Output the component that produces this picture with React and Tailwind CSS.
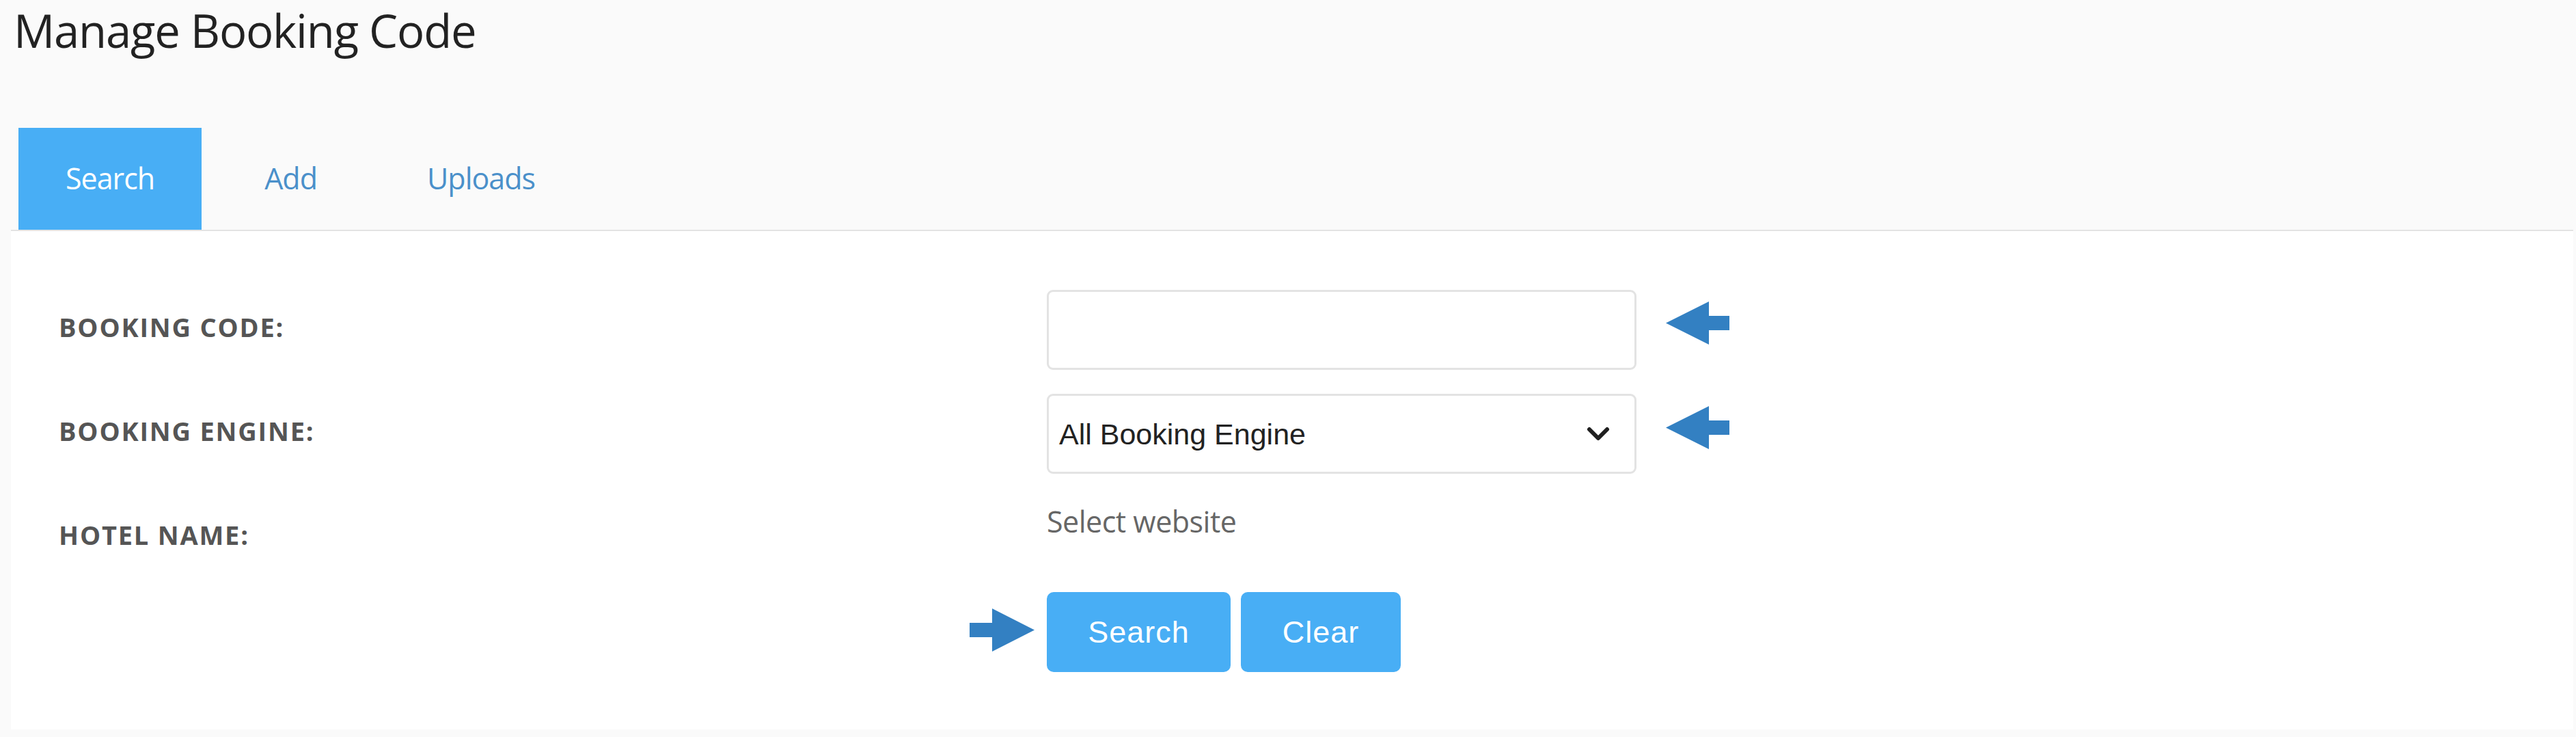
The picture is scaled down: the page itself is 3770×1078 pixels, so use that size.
import React from "react";

function ArrowLeft() {
  return (
    <svg width="93" height="63" viewBox="0 0 93 63" className="block">
      <polygon points="0,31.5 63,0 63,21 93,21 93,42 63,42 63,63" fill="#3380c2" />
    </svg>
  );
}

function ArrowRight() {
  return (
    <svg width="95" height="63" viewBox="0 0 95 63" className="block">
      <polygon points="95,31.5 33,0 33,21 0,21 0,42 33,42 33,63" fill="#3380c2" />
    </svg>
  );
}

function Chevron() {
  return (
    <svg width="34" height="22" viewBox="0 0 34 22" className="block">
      <polyline
        points="4,4 17,17 30,4"
        fill="none"
        stroke="#1f1f1f"
        strokeWidth="6"
        strokeLinecap="round"
        strokeLinejoin="round"
      />
    </svg>
  );
}

const labelCls =
  "w-[1516px] shrink-0 pl-[70px] pt-[34px] leading-[40px] text-[38px] font-bold tracking-[1.8px] text-[#555555] font-['Open_Sans',sans-serif]";

export default function App() {
  return (
    <div className="min-h-screen w-full bg-[#fafafa] font-['Open_Sans',sans-serif]">
      <div className="pl-[20px] pt-[4px]">
        <h1 className="text-[67px] leading-[80px] font-normal tracking-[-1.2px] text-[#222222]">
          Manage Booking Code
        </h1>
      </div>

      <div className="ml-[16px] mr-[4px] mt-[103px]">
        {/* Tabs */}
        <div className="flex pl-[11px] border-b-2 border-[#e3e3e3]">
          <div className="h-[149px] px-[69px] mr-[23px] flex items-center bg-[#48aef5] text-white text-[43px] tracking-[-1px]">
            Search
          </div>
          <div className="h-[149px] px-[69px] mr-[23px] flex items-center text-[#4a90ca] text-[43px] tracking-[-1px]">
            Add
          </div>
          <div className="h-[149px] px-[69px] mr-[23px] flex items-center text-[#4a90ca] text-[43px] tracking-[-1px]">
            Uploads
          </div>
        </div>

        {/* Panel */}
        <div className="bg-white pt-[86px] pb-[84px]">
          {/* Row 1 */}
          <div className="flex items-start h-[117px]">
            <div className={labelCls}>BOOKING CODE:</div>
            <div className="w-[863px] h-[117px] shrink-0 border-[3px] border-[#e3e3e3] rounded-[9px] bg-white"></div>
            <div className="ml-[43px] mt-[17px]">
              <ArrowLeft />
            </div>
          </div>

          {/* Row 2 */}
          <div className="flex items-start h-[117px] mt-[35px]">
            <div className={labelCls}>BOOKING ENGINE:</div>
            <div className="w-[863px] h-[117px] shrink-0 border-[3px] border-[#e3e3e3] rounded-[9px] bg-white flex items-center justify-between pl-[15px] pr-[36px]">
              <span className="text-[43px] leading-[50px] text-[#222222] font-['Liberation_Sans',Arial,sans-serif]">
                All Booking Engine
              </span>
              <Chevron />
            </div>
            <div className="ml-[43px] mt-[18px]">
              <ArrowLeft />
            </div>
          </div>

          {/* Row 3 */}
          <div className="flex items-start h-[103px] mt-[35px]">
            <div className={labelCls}>HOTEL NAME:</div>
            <div className="w-[863px] shrink-0 text-[43px] leading-[70px] tracking-[-0.5px] text-[#666666]">
              Select website
            </div>
          </div>

          {/* Row 4 */}
          <div className="flex items-start h-[117px] mt-[35px]">
            <div className="w-[1516px] shrink-0 flex justify-end pr-[18px] pt-[24px]">
              <ArrowRight />
            </div>
            <div className="flex gap-[15px]">
              <button className="w-[269px] h-[117px] rounded-[10px] bg-[#48aef5] text-white text-[45px] tracking-[1px] font-['Liberation_Sans',Arial,sans-serif] flex items-center justify-center">
                Search
              </button>
              <button className="w-[234px] h-[117px] rounded-[10px] bg-[#48aef5] text-white text-[45px] tracking-[1px] font-['Liberation_Sans',Arial,sans-serif] flex items-center justify-center">
                Clear
              </button>
            </div>
          </div>
        </div>
      </div>
    </div>
  );
}
